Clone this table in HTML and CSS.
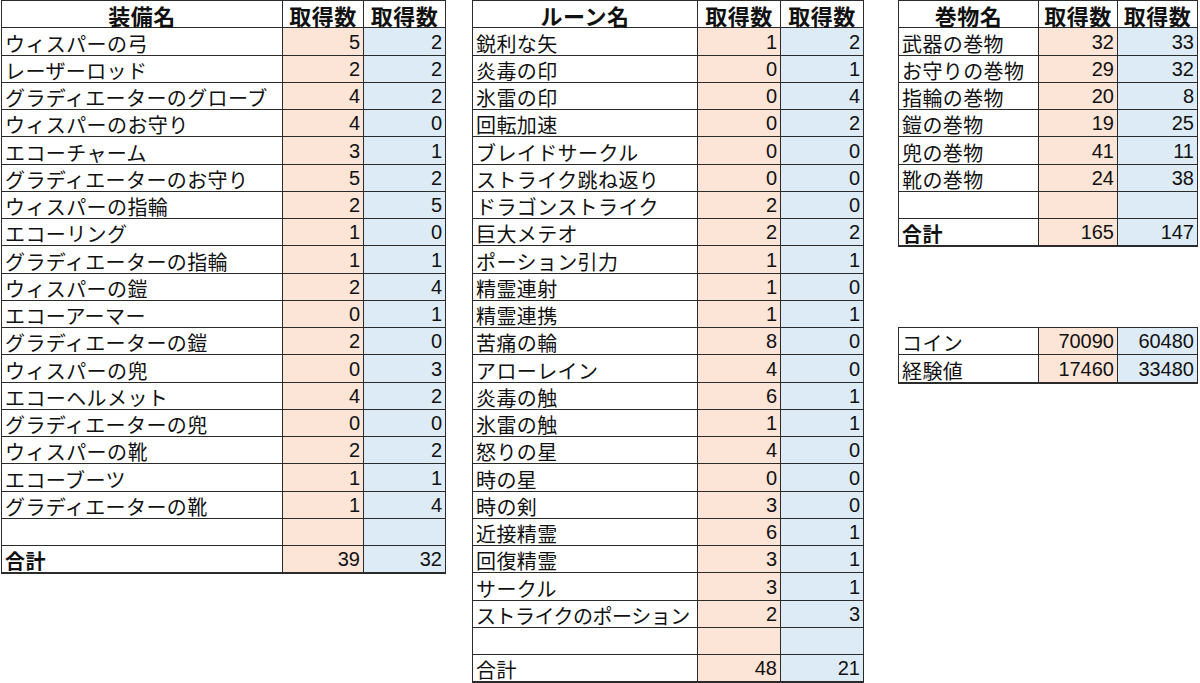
FILE: index.html
```html
<!DOCTYPE html>
<html lang="ja">
<head>
<meta charset="utf-8">
<link rel="stylesheet" href="styles.css">
</head>
<body>
<div class="page">
  <div class="sheet t1">
    <div class="c hd">装備名</div><div class="c hd">取得数</div><div class="c hd">取得数</div>
    <div class="c nm">ウィスパーの弓</div><div class="c a">5</div><div class="c b">2</div>
    <div class="c nm">レーザーロッド</div><div class="c a">2</div><div class="c b">2</div>
    <div class="c nm">グラディエーターのグローブ</div><div class="c a">4</div><div class="c b">2</div>
    <div class="c nm">ウィスパーのお守り</div><div class="c a">4</div><div class="c b">0</div>
    <div class="c nm">エコーチャーム</div><div class="c a">3</div><div class="c b">1</div>
    <div class="c nm">グラディエーターのお守り</div><div class="c a">5</div><div class="c b">2</div>
    <div class="c nm">ウィスパーの指輪</div><div class="c a">2</div><div class="c b">5</div>
    <div class="c nm">エコーリング</div><div class="c a">1</div><div class="c b">0</div>
    <div class="c nm">グラディエーターの指輪</div><div class="c a">1</div><div class="c b">1</div>
    <div class="c nm">ウィスパーの鎧</div><div class="c a">2</div><div class="c b">4</div>
    <div class="c nm">エコーアーマー</div><div class="c a">0</div><div class="c b">1</div>
    <div class="c nm">グラディエーターの鎧</div><div class="c a">2</div><div class="c b">0</div>
    <div class="c nm">ウィスパーの兜</div><div class="c a">0</div><div class="c b">3</div>
    <div class="c nm">エコーヘルメット</div><div class="c a">4</div><div class="c b">2</div>
    <div class="c nm">グラディエーターの兜</div><div class="c a">0</div><div class="c b">0</div>
    <div class="c nm">ウィスパーの靴</div><div class="c a">2</div><div class="c b">2</div>
    <div class="c nm">エコーブーツ</div><div class="c a">1</div><div class="c b">1</div>
    <div class="c nm">グラディエーターの靴</div><div class="c a">1</div><div class="c b">4</div>
    <div class="c nm"></div><div class="c a"></div><div class="c b"></div>
    <div class="c nm bold">合計</div><div class="c a">39</div><div class="c b">32</div>
  </div>

  <div class="sheet t2">
    <div class="c hd">ルーン名</div><div class="c hd">取得数</div><div class="c hd">取得数</div>
    <div class="c nm">鋭利な矢</div><div class="c a">1</div><div class="c b">2</div>
    <div class="c nm">炎毒の印</div><div class="c a">0</div><div class="c b">1</div>
    <div class="c nm">氷雷の印</div><div class="c a">0</div><div class="c b">4</div>
    <div class="c nm">回転加速</div><div class="c a">0</div><div class="c b">2</div>
    <div class="c nm">ブレイドサークル</div><div class="c a">0</div><div class="c b">0</div>
    <div class="c nm">ストライク跳ね返り</div><div class="c a">0</div><div class="c b">0</div>
    <div class="c nm">ドラゴンストライク</div><div class="c a">2</div><div class="c b">0</div>
    <div class="c nm">巨大メテオ</div><div class="c a">2</div><div class="c b">2</div>
    <div class="c nm">ポーション引力</div><div class="c a">1</div><div class="c b">1</div>
    <div class="c nm">精霊連射</div><div class="c a">1</div><div class="c b">0</div>
    <div class="c nm">精霊連携</div><div class="c a">1</div><div class="c b">1</div>
    <div class="c nm">苦痛の輪</div><div class="c a">8</div><div class="c b">0</div>
    <div class="c nm">アローレイン</div><div class="c a">4</div><div class="c b">0</div>
    <div class="c nm">炎毒の触</div><div class="c a">6</div><div class="c b">1</div>
    <div class="c nm">氷雷の触</div><div class="c a">1</div><div class="c b">1</div>
    <div class="c nm">怒りの星</div><div class="c a">4</div><div class="c b">0</div>
    <div class="c nm">時の星</div><div class="c a">0</div><div class="c b">0</div>
    <div class="c nm">時の剣</div><div class="c a">3</div><div class="c b">0</div>
    <div class="c nm">近接精霊</div><div class="c a">6</div><div class="c b">1</div>
    <div class="c nm">回復精霊</div><div class="c a">3</div><div class="c b">1</div>
    <div class="c nm">サークル</div><div class="c a">3</div><div class="c b">1</div>
    <div class="c nm tight">ストライクのポーション</div><div class="c a">2</div><div class="c b">3</div>
    <div class="c nm"></div><div class="c a"></div><div class="c b"></div>
    <div class="c nm">合計</div><div class="c a">48</div><div class="c b">21</div>
  </div>

  <div class="col3">
    <div class="sheet t3">
      <div class="c hd">巻物名</div><div class="c hd">取得数</div><div class="c hd">取得数</div>
      <div class="c nm">武器の巻物</div><div class="c a">32</div><div class="c b">33</div>
      <div class="c nm">お守りの巻物</div><div class="c a">29</div><div class="c b">32</div>
      <div class="c nm">指輪の巻物</div><div class="c a">20</div><div class="c b">8</div>
      <div class="c nm">鎧の巻物</div><div class="c a">19</div><div class="c b">25</div>
      <div class="c nm">兜の巻物</div><div class="c a">41</div><div class="c b">11</div>
      <div class="c nm">靴の巻物</div><div class="c a">24</div><div class="c b">38</div>
      <div class="c nm"></div><div class="c a"></div><div class="c b"></div>
      <div class="c nm bold">合計</div><div class="c a">165</div><div class="c b">147</div>
    </div>
    <div class="sheet t3 coin">
      <div class="c nm">コイン</div><div class="c a">70090</div><div class="c b">60480</div>
      <div class="c nm">経験値</div><div class="c a">17460</div><div class="c b">33480</div>
    </div>
  </div>
</div>
</body>
</html>
```

FILE: styles.css
```css
html, body {
  margin: 0;
  padding: 0;
  background: #ffffff;
}

.page {
  display: flex;
  align-items: flex-start;
  padding-left: 1px;
  font-family: "Noto Sans CJK JP", "Noto Sans", sans-serif;
  color: #111;
}

.sheet {
  display: grid;
  grid-auto-rows: 26.25px;
  gap: 1px;
  background: #2b2b2b;
  border: 1px solid #2b2b2b;
  border-bottom-width: 2px;
}

.t1 {
  grid-template-columns: 280px 80px 81px;
}

.t2 {
  margin-left: 26px;
  grid-template-columns: 224px 82px 82px;
}

.col3 {
  margin-left: 34px;
  display: flex;
  flex-direction: column;
}

.t3 {
  grid-template-columns: 139px 78px 79px;
}

.coin {
  margin-top: 79.75px;
}

.c {
  background: #ffffff;
  display: flex;
  align-items: flex-end;
  white-space: nowrap;
  min-width: 0;
}

.hd {
  justify-content: center;
  font-weight: 700;
  font-size: 22px;
  line-height: 22px;
  padding-bottom: 1px;
  letter-spacing: 0.5px;
}

.nm {
  font-size: 20px;
  line-height: 20px;
  padding-left: 3px;
  padding-bottom: 1px;
  letter-spacing: 0.4px;
}

.tight {
  letter-spacing: -0.5px;
}

.bold {
  font-weight: 700;
}

.a, .b {
  justify-content: flex-end;
  font-family: "Liberation Sans", Arial, sans-serif;
  font-size: 20px;
  line-height: 20px;
  padding-right: 3px;
  padding-bottom: 3px;
}

.a {
  background: #fce4d6;
}

.b {
  background: #ddebf7;
}
```
